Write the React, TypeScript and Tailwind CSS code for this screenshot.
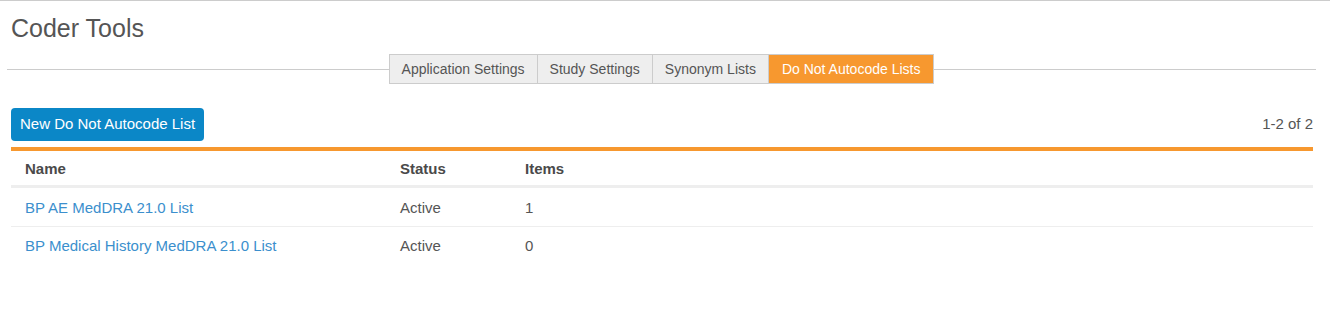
const tabs = [
  { label: "Application Settings", active: false },
  { label: "Study Settings", active: false },
  { label: "Synonym Lists", active: false },
  { label: "Do Not Autocode Lists", active: true },
];

const rows = [
  { name: "BP AE MedDRA 21.0 List", status: "Active", items: 1 },
  { name: "BP Medical History MedDRA 21.0 List", status: "Active", items: 0 },
];

export default function App() {
  return (
    <main className="min-h-[325px] border-t border-[#cccccc] bg-white font-['Liberation_Sans',Arial,sans-serif] text-[14px] text-[#555555]">
      <h1 className="mt-[14px] pl-[11px] text-[25px] leading-[26px] text-[#555555]">Coder Tools</h1>

      <div className="mt-[13px] flex items-center pl-[7px] pr-[14px]">
        <div className="h-px flex-1 bg-[#cccccc]" />
        <nav className="flex">
          {tabs.map((t, i) => (
            <a
              key={t.label}
              className={
                "flex h-[30px] items-center border-y border-l border-[#cccccc] leading-none " +
                (i === tabs.length - 1 ? "border-r px-[13px] " : "px-[12px] ") +
                (t.active ? "bg-[#f7982f] text-white" : "bg-[#eeeeee] text-[#555555]")
              }
            >
              {t.label}
            </a>
          ))}
        </nav>
        <div className="h-px flex-1 bg-[#cccccc]" />
      </div>

      <section className="pl-[11px] pr-[17px]">
        <div className="mt-[24px] flex items-center justify-between">
          <button className="h-[33px] rounded-[4px] bg-[#0b87c7] px-[9px] text-[15px] text-white">
            New Do Not Autocode List
          </button>
          <span className="text-[15px] text-[#555555]">1-2 of 2</span>
        </div>

        <div className="mt-[6px] h-[4px] bg-[#f7982f]" />
        <table className="w-full border-collapse text-left text-[15px] leading-[18px]">
          <thead>
            <tr className="border-b-[3px] border-[#eeeeee] font-bold text-[#4a4a4a]">
              <th className="w-[375px] pt-[9px] pb-[7px] pl-[14px]">Name</th>
              <th className="w-[125px] pt-[9px] pb-[7px] pl-[14px]">Status</th>
              <th className="pt-[9px] pb-[7px] pl-[14px]">Items</th>
            </tr>
          </thead>
          <tbody>
            {rows.map((r, i) => {
              const pad = i > 0 ? "pt-[10px] pb-[8px]" : "pt-[11px] pb-[9px]";
              return (
                <tr key={r.name} className={i > 0 ? "border-t border-[#eeeeee]" : ""}>
                  <td className={pad + " pl-[14px]"}>
                    <a className="text-[#3b8fcd]">{r.name}</a>
                  </td>
                  <td className={pad + " pl-[14px]"}>{r.status}</td>
                  <td className={pad + " pl-[14px]"}>{r.items}</td>
                </tr>
              );
            })}
          </tbody>
        </table>
      </section>
    </main>
  );
}
